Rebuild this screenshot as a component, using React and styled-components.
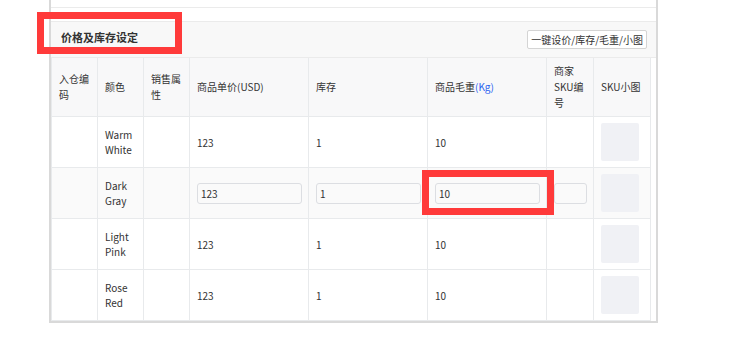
import React from 'react';
import styled, { createGlobalStyle } from 'styled-components';

const GlobalStyle = createGlobalStyle`
  html, body {
    margin: 0;
    padding: 0;
    background: #fff;
  }
  body {
    font-family: "Noto Sans CJK SC", "Noto Sans", sans-serif;
    color: #333;
  }
`;

const Page = styled.div`
  position: relative;
  width: 753px;
  height: 337px;
  overflow: hidden;
`;

const Panel = styled.div`
  margin-left: 49px;
  width: 609px;
  box-sizing: border-box;
  border: 2px solid #d9d9d9;
  border-top: none;
`;

const PrevBlock = styled.div`
  height: 7px;
  border-bottom: 1px solid #ebebeb;
  margin-bottom: 13px;
`;

const SectionHeader = styled.div`
  display: flex;
  align-items: center;
  justify-content: space-between;
  height: 35px;
  padding: 0 9px 0 10px;
  background: #f8f8f8;
  border-top: 1px solid #ebebeb;
  border-bottom: 1px solid #ebebeb;
`;

const Title = styled.div`
  font-size: 11px;
  font-weight: bold;
  color: #333;
  padding-bottom: 6px;
`;

const BatchButton = styled.button`
  height: 19px;
  padding: 0 3px;
  border: 1px solid #d4d4d4;
  border-radius: 2px;
  background: #fff;
  color: #333;
  font-family: inherit;
  font-size: 10px;
  line-height: 17px;
  cursor: pointer;
`;

const Table = styled.div`
  width: 600px;
  box-sizing: border-box;
  border-left: 1px solid #e8eaec;
`;

const Row = styled.div`
  display: grid;
  grid-template-columns: 46px 46px 46px 119px 119px 119px 47px 57px;
  background: ${(p) => p.$bg || '#fff'};
`;

const Cell = styled.div`
  box-sizing: border-box;
  height: ${(p) => (p.$head ? 59 : 51)}px;
  padding: 0 6px 0 7px;
  display: flex;
  align-items: center;
  border-right: 1px solid #e8eaec;
  border-bottom: 1px solid #e8eaec;
  font-size: 10px;
  line-height: ${(p) => (p.$head ? 16 : 15)}px;
  color: #333;
`;

const Unit = styled.span`
  color: #2b63f0;
`;

const TextInput = styled.input`
  width: 100%;
  height: 21px;
  box-sizing: border-box;
  border: 1px solid #dcdee2;
  border-radius: 3px;
  padding: 0 3px;
  background: transparent;
  font-family: inherit;
  font-size: 10px;
  color: #333;
  outline: none;
`;

const Thumb = styled.div`
  width: 38px;
  height: 38px;
  border-radius: 2px;
  background: #f0f1f5;
`;

const Highlight = styled.div`
  position: absolute;
  box-sizing: border-box;
  border: 7px solid #ff3a3a;
  left: ${(p) => p.$x}px;
  top: ${(p) => p.$y}px;
  width: ${(p) => p.$w}px;
  height: ${(p) => p.$h}px;
  pointer-events: none;
`;

const headers = [
  '入仓编码',
  '颜色',
  '销售属性',
  '商品单价(USD)',
  '库存',
  <>商品毛重<Unit>(Kg)</Unit></>,
  '商家SKU编号',
  'SKU小图',
];

const skus = [
  { color: 'Warm White', price: '123', stock: '1', weight: '10' },
  { color: 'Dark Gray', price: '123', stock: '1', weight: '10', editing: true },
  { color: 'Light Pink', price: '123', stock: '1', weight: '10' },
  { color: 'Rose Red', price: '123', stock: '1', weight: '10' },
];

const SkuRow = ({ sku }) => {
  const field = (v) => (sku.editing ? <TextInput defaultValue={v} /> : <span>{v}</span>);
  return (
    <Row $bg={sku.editing ? '#fafafa' : '#fff'}>
      <Cell />
      <Cell><span>{sku.color}</span></Cell>
      <Cell />
      <Cell>{field(sku.price)}</Cell>
      <Cell>{field(sku.stock)}</Cell>
      <Cell>{field(sku.weight)}</Cell>
      <Cell>{sku.editing ? <TextInput defaultValue="" /> : null}</Cell>
      <Cell><Thumb /></Cell>
    </Row>
  );
};

export default function App() {
  return (
    <>
      <GlobalStyle />
      <Page>
        <Panel>
          <PrevBlock />
          <SectionHeader>
            <Title>价格及库存设定</Title>
            <BatchButton>一键设价/库存/毛重/小图</BatchButton>
          </SectionHeader>
          <Table>
            <Row $bg="#f8f8f9">
              {headers.map((h, i) => (
                <Cell $head key={i}><span>{h}</span></Cell>
              ))}
            </Row>
            {skus.map((s) => (
              <SkuRow sku={s} key={s.color} />
            ))}
          </Table>
        </Panel>
        <Highlight $x={37} $y={12} $w={145} $h={42} />
        <Highlight $x={422} $y={170} $w={132} $h={45} />
      </Page>
    </>
  );
}
